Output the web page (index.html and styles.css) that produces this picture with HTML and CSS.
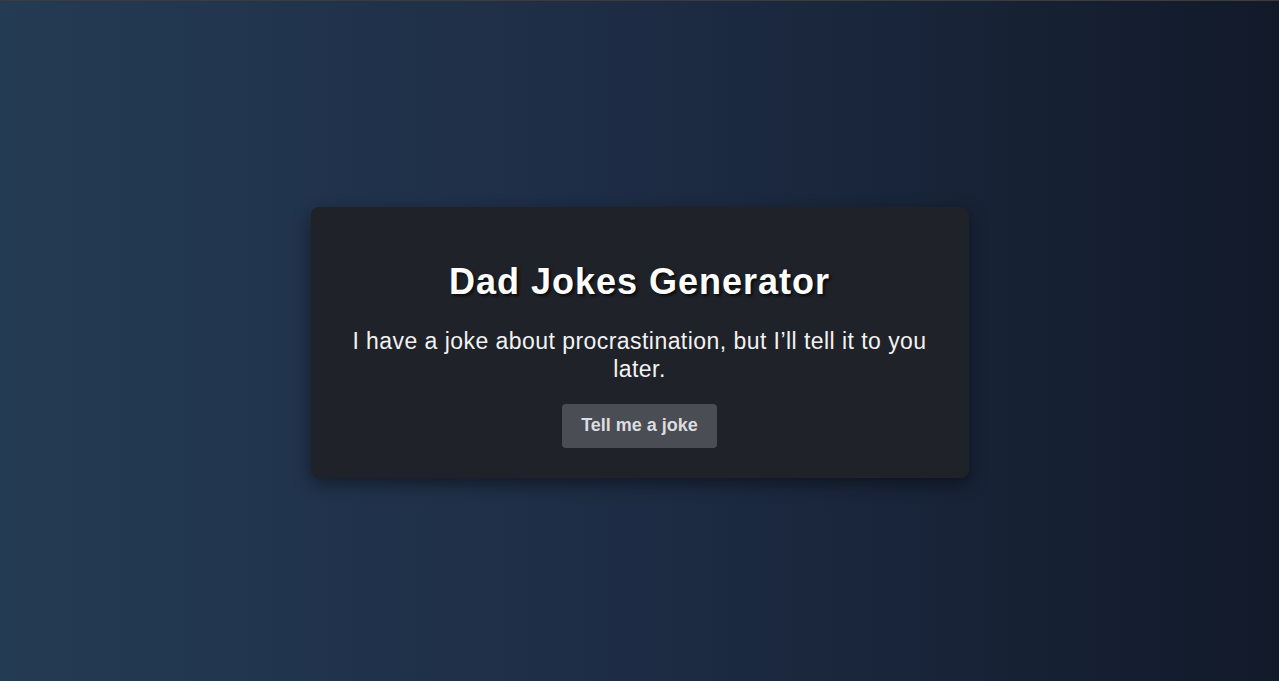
FILE: index.html
```html
<!DOCTYPE html>
<html lang="en">
<head>
<meta charset="utf-8">
<title>Dad Jokes Generator</title>
<link rel="stylesheet" href="styles.css">
</head>
<body>
<main class="page">
  <section class="card">
    <h1 class="title">Dad Jokes Generator</h1>
    <p class="joke">I have a joke about procrastination, but I’ll tell it to you later.</p>
    <button class="btn" type="button">Tell me a joke</button>
  </section>
</main>
</body>
</html>
```
FILE: styles.css
```css
* { box-sizing: border-box; }
html, body { margin: 0; height: 100%; }
body {
  font-family: "Liberation Sans", Arial, sans-serif;
  background: linear-gradient(to right, #243b54 0%, #1d2c44 50%, #121a2a 100%);
  border-top: 1px solid #3b3c3d;
  color: #fff;
}
.page {
  height: 680px;
  display: flex;
  align-items: center;
  justify-content: center;
  padding-top: 2px;
}
.card {
  width: 658px;
  background: #1f2229;
  border-radius: 8px;
  padding: 54px 40px 30px;
  text-align: center;
  box-shadow: 0 6px 18px rgba(0, 0, 0, 0.45);
}
.title {
  margin: 0;
  font-size: 36px;
  line-height: 41px;
  font-weight: 700;
  letter-spacing: 1px;
  text-shadow: 2px 2px 3px rgba(0, 0, 0, 0.7);
}
.joke {
  margin: 25px 0 21px;
  font-size: 23px;
  line-height: 28px;
  letter-spacing: 0.45px;
  color: #f2f2f2;
}
.btn {
  font-family: inherit;
  font-size: 18px;
  font-weight: 700;
  color: #dcdde0;
  background: #4a4d54;
  border: none;
  border-radius: 4px;
  width: 155px;
  height: 44px;
  cursor: pointer;
}
```
